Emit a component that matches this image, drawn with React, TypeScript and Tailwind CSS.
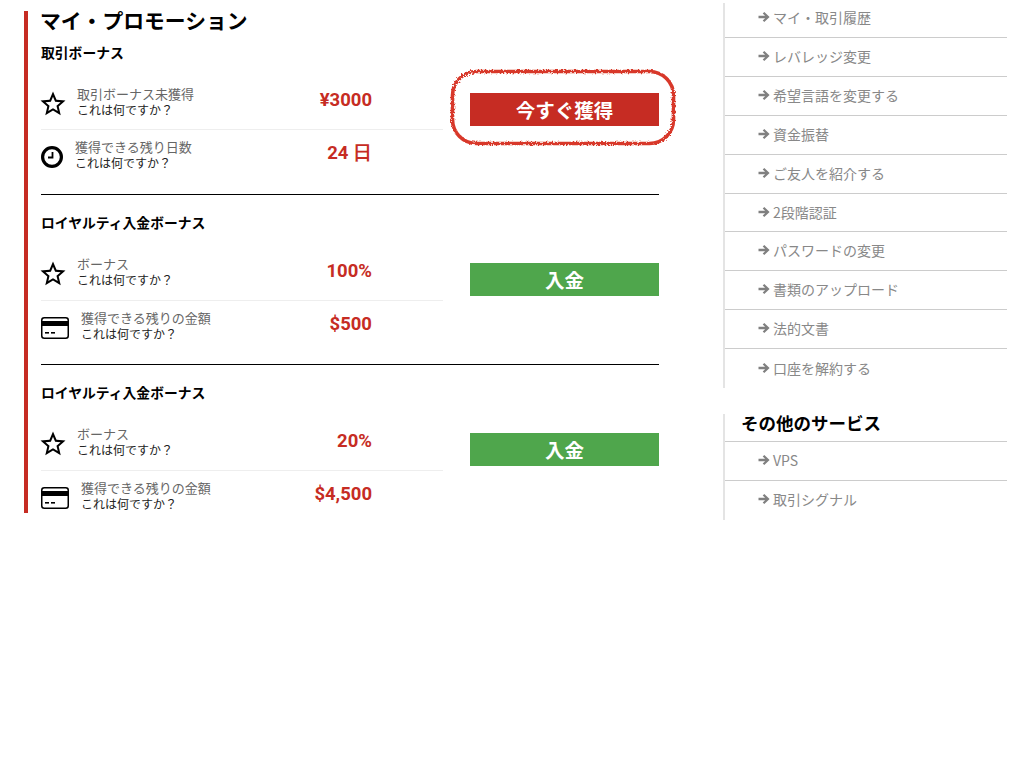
const jpFont = 'font-["Hiragino_Sans","Noto_Sans_CJK_JP",sans-serif]';

const StarIcon = () => (
  <svg viewBox="0 0 24 24" className="ml-[-3px] h-[30px] w-[30px] shrink-0" fill="#000">
    <path d="M22 9.24l-7.19-.62L12 2 9.19 8.63 2 9.24l5.46 4.73L5.82 21 12 17.27 18.18 21l-1.63-7.03L22 9.24zM12 15.4l-3.76 2.27 1-4.28-3.32-2.88 4.38-.38L12 6.1l1.71 4.04 4.38.38-3.32 2.88 1 4.28L12 15.4z" />
  </svg>
);

const ClockIcon = () => (
  <svg viewBox="0 0 22 22" className="h-[22px] w-[22px] shrink-0" fill="none" stroke="#000">
    <circle cx="11" cy="11" r="9.4" strokeWidth="3.2" />
    <path d="M11.5 6v5.5H7" strokeWidth="1.8" />
  </svg>
);

const CardIcon = () => (
  <svg viewBox="0 0 28 22" className="h-[22px] w-[28px] shrink-0" fill="none">
    <rect x="0.75" y="0.75" width="26.5" height="20.5" rx="2.5" stroke="#000" strokeWidth="1.5" />
    <rect x="1" y="4" width="26" height="5" fill="#000" />
    <rect x="4" y="15" width="4" height="1.6" fill="#000" />
    <rect x="10" y="15" width="4" height="1.6" fill="#000" />
  </svg>
);

const ArrowIcon = () => (
  <svg viewBox="0 0 12 12" className="mr-[3px] h-[12px] w-[12px] shrink-0" fill="#808080">
    <path d="M6.3 1 L11.6 6 L6.3 11 L4.7 9.5 L7.1 7.3 H0.5 V4.7 H7.1 L4.7 2.5 Z" />
  </svg>
);

const RoughOutline = () => (
  <svg
    viewBox="0 0 226 77"
    className="pointer-events-none absolute left-[-20px] top-[-24px] h-[77px] w-[226px]"
    fill="none"
  >
    <defs>
      <filter id="rough" x="-5%" y="-10%" width="110%" height="120%">
        <feTurbulence type="fractalNoise" baseFrequency="0.6" numOctaves="2" seed="4" />
        <feDisplacementMap in="SourceGraphic" scale="4" />
      </filter>
    </defs>
    <rect x="2.5" y="2.5" width="221" height="72" rx="24" stroke="#d8382a" strokeWidth="3.6" filter="url(#rough)" />
  </svg>
);

type RowProps = {
  icon: React.ReactNode;
  textLeft: string;
  label: string;
  amount: string;
  height: string;
  divider?: boolean;
};

const BonusRow = ({ icon, textLeft, label, amount, height, divider }: RowProps) => (
  <div className={`flex items-center pr-[71px] ${height} ${divider ? 'border-b border-[#eeeeee]' : ''}`}>
    <div className="flex w-[36px] shrink-0 items-center">{icon}</div>
    <div className={`mb-[4px] ${textLeft}`}>
      <div className="text-[13px] leading-[16px] text-[#666666]">{label}</div>
      <div className="text-[12px] leading-[16px] text-[#222222]">これは何ですか？</div>
    </div>
    <div className="mb-[7px] ml-auto font-['Roboto'] text-[18.5px] font-bold leading-[24px] text-[#c62c23]">
      {amount}
    </div>
  </div>
);

type SectionProps = {
  title: string;
  first: Omit<RowProps, 'height' | 'divider'>;
  second: Omit<RowProps, 'height' | 'divider'>;
  button: React.ReactNode;
  last?: boolean;
};

const BonusSection = ({ title, first, second, button, last }: SectionProps) => (
  <section className={last ? '' : 'h-[170px] border-b border-black'}>
    <h3 className="flex h-[53px] items-center text-[13.8px] font-bold leading-[20px] text-black">{title}</h3>
    <div className="flex">
      <div className="w-[402px]">
        <BonusRow {...first} height="h-[53px]" divider />
        <BonusRow {...second} height="h-[53px]" />
      </div>
      <div className="ml-[27px] w-[189px] pt-[15px]">{button}</div>
    </div>
  </section>
);

const sideLinks = [
  'マイ・取引履歴',
  'レバレッジ変更',
  '希望言語を変更する',
  '資金振替',
  'ご友人を紹介する',
  '2段階認証',
  'パスワードの変更',
  '書類のアップロード',
  '法的文書',
  '口座を解約する',
];

const SideLink = ({ label, last, first }: { label: string; last?: boolean; first?: boolean }) => (
  <a
    className={`flex items-center pl-[33px] text-[14px] leading-[20px] text-[#888888] ${
      first ? 'h-[35px] pb-[6px]' : 'h-[38.9px] pb-[2px]'
    } ${last ? '' : 'border-b border-[#cccccc]'}`}
  >
    <ArrowIcon />
    {label}
  </a>
);

export default function App() {
  return (
    <div className={`flex min-h-[768px] bg-white pl-[24px] ${jpFont}`}>
      <main className="mt-[11px] h-[502px] w-[635px] border-l-4 border-[#c62c23] pl-[13px]">
        <h2 className="ml-[-1px] mt-[-2px] h-[26px] text-[20.8px] font-bold leading-[22px] text-black">
          マイ・プロモーション
        </h2>
        <div className="mt-[-6px]">
          <section className="h-[166px] border-b border-black">
            <h3 className="flex h-[36px] items-end pb-[3px] text-[13.8px] font-bold leading-[20px] text-black">
              取引ボーナス
            </h3>
            <div className="mt-[13px] flex">
              <div className="w-[402px]">
                <BonusRow
                  icon={<StarIcon />}
                  textLeft=""
                  label="取引ボーナス未獲得"
                  amount="¥3000"
                  height="h-[52px]"
                  divider
                />
                <BonusRow
                  icon={<ClockIcon />}
                  textLeft="ml-[-2px]"
                  label="獲得できる残り日数"
                  amount="24 日"
                  height="h-[53px]"
                />
              </div>
              <div className="relative ml-[27px] w-[189px] pt-[15px]">
                <button className="relative block h-[33px] w-[189px] bg-[#c62c23] text-[19.5px] font-bold text-white">
                  今すぐ獲得
                  <RoughOutline />
                </button>
              </div>
            </div>
          </section>
          <BonusSection
            title="ロイヤルティ入金ボーナス"
            first={{ icon: <StarIcon />, textLeft: '', label: 'ボーナス', amount: '100%' }}
            second={{ icon: <CardIcon />, textLeft: 'ml-[4px]', label: '獲得できる残りの金額', amount: '$500' }}
            button={
              <button className="block h-[33px] w-[189px] bg-[#4fa64c] text-[19.5px] font-bold text-white">入金</button>
            }
          />
          <BonusSection
            last
            title="ロイヤルティ入金ボーナス"
            first={{ icon: <StarIcon />, textLeft: '', label: 'ボーナス', amount: '20%' }}
            second={{ icon: <CardIcon />, textLeft: 'ml-[4px]', label: '獲得できる残りの金額', amount: '$4,500' }}
            button={
              <button className="block h-[33px] w-[189px] bg-[#4fa64c] text-[19.5px] font-bold text-white">入金</button>
            }
          />
        </div>
      </main>
      <aside className="ml-[65px] w-[284px] translate-x-[-1px]">
        <div className="mt-[3px] border-l-2 border-[#e4e4e4]">
          {sideLinks.map((label, i) => (
            <SideLink key={label} label={label} first={i === 0} last={i === sideLinks.length - 1} />
          ))}
        </div>
        <div className="mt-[26px] border-l-2 border-[#e4e4e4]">
          <h3 className="flex h-[28px] items-start border-b border-[#cccccc] pl-[16px] text-[17.5px] font-bold leading-[18px] text-black">
            その他のサービス
          </h3>
          <SideLink label="VPS" />
          <SideLink label="取引シグナル" last />
        </div>
      </aside>
    </div>
  );
}
